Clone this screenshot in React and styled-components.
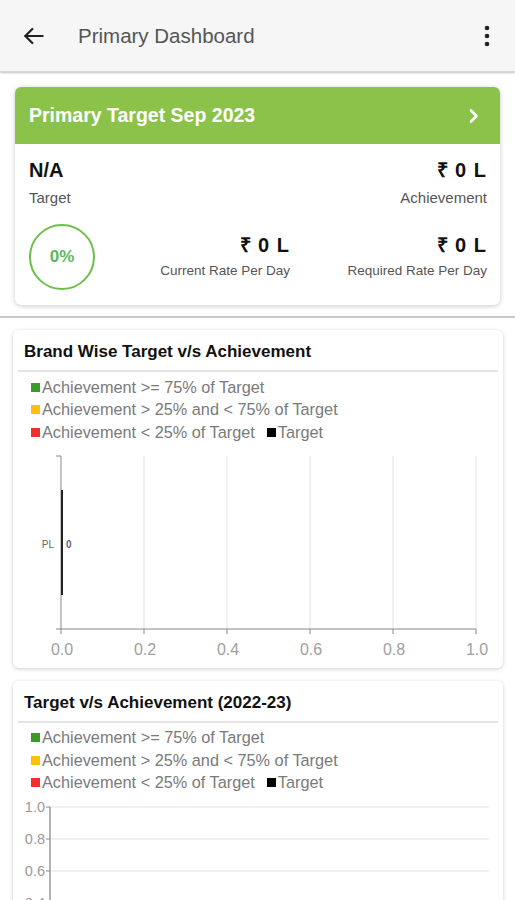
import React from "react";
import styled, { createGlobalStyle } from "styled-components";

const Global = createGlobalStyle`
  html, body { margin: 0; padding: 0; background: #fff; }
  body { font-family: "Liberation Sans", Arial, sans-serif; width: 515px; height: 900px; overflow: hidden; }
  * { box-sizing: border-box; }
`;

const Page = styled.div`
  width: 515px;
  height: 900px;
  overflow: hidden;
  background: #fff;
  display: flex;
  flex-direction: column;
`;

const AppBar = styled.header`
  height: 72px;
  flex: none;
  background: #f6f6f6;
  display: flex;
  align-items: center;
  padding: 0 14px 0 20px;
  box-shadow: 0 1px 2px rgba(0,0,0,0.25);
  border-bottom: 1px solid #d8d8d8;
  position: relative;
  z-index: 1;
`;

const IconBtn = styled.div`
  width: 28px;
  height: 28px;
  display: flex;
  align-items: center;
  justify-content: center;
  color: #222;
`;

const BarTitle = styled.h1`
  margin: 0 0 0 30px;
  font-size: 20.5px;
  font-weight: 400;
  color: #555;
  flex: 1;
`;

const Top = styled.section`
  flex: none;
  padding: 15px 15px 11px 15px;
  border-bottom: 2px solid #c9c9c9;
`;

const Card = styled.div`
  background: #fff;
  border-radius: 6px;
  box-shadow: 0 1px 5px rgba(0,0,0,0.22);
  overflow: hidden;
`;

const GreenHead = styled.div`
  height: 57px;
  background: #8bc34a;
  display: flex;
  align-items: center;
  justify-content: space-between;
  padding: 0 20px 0 14px;
  color: #fff;
  font-size: 19.5px;
  font-weight: 700;
`;

const Body = styled.div`
  padding: 14px 13px 15px 14px;
`;

const Row = styled.div`
  display: flex;
  justify-content: space-between;
  align-items: ${p => p.$align || "flex-start"};
  margin-top: ${p => p.$mt || 0}px;
`;

const Stat = styled.div`
  display: flex;
  flex-direction: column;
  align-items: ${p => (p.$right ? "flex-end" : "flex-start")};
  width: ${p => p.$w || "auto"};
`;

const Big = styled.div`
  font-size: 20px;
  font-weight: 700;
  color: #111;
  line-height: 24px;
  letter-spacing: ${p => (p.$spaced ? "1px" : "0")};
`;

const Label = styled.div`
  font-size: ${p => p.$size || 15}px;
  color: #555;
  margin-top: ${p => p.$mt || 7}px;
`;

const Circle = styled.div`
  width: 66px;
  height: 66px;
  border-radius: 50%;
  border: 2px solid #6cc04a;
  display: flex;
  align-items: center;
  justify-content: center;
  color: #5cb85c;
  font-weight: 700;
  font-size: 17px;
`;

const Rates = styled.div`
  display: flex;
  margin-top: -4px;
`;

const Charts = styled.div`
  padding: 12px 12px 0 13px;
  display: flex;
  flex-direction: column;
  gap: 13px;
`;

const ChartCard = styled.div`
  background: #fff;
  border-radius: 6px;
  box-shadow: 0 1px 4px rgba(0,0,0,0.2);
  padding: 0 5px;
`;

const ChartTitle = styled.div`
  font-size: 17px;
  font-weight: 700;
  color: #111;
  padding: 12px 6px 8px 6px;
  border-bottom: 2px solid #e3e3e3;
`;

const Legend = styled.div`
  padding: 4px 0 0 13px;
  display: flex;
  flex-direction: column;
`;

const LegendRow = styled.div`
  display: flex;
  align-items: center;
  height: 22.5px;
  font-size: 16.3px;
  color: #7a7a7a;
`;

const Swatch = styled.span`
  width: 9px;
  height: 9px;
  background: ${p => p.$c};
  margin: 0 2px 0 ${p => p.$ml || 0}px;
  display: inline-block;
`;

const LegendBlock = () => (
  <Legend>
    <LegendRow><Swatch $c="#3a9a2a" />Achievement &gt;= 75% of Target</LegendRow>
    <LegendRow><Swatch $c="#ffc107" />Achievement &gt; 25% and &lt; 75% of Target</LegendRow>
    <LegendRow><Swatch $c="#f0302a" />Achievement &lt; 25% of Target<Swatch $c="#000" $ml={12} />Target</LegendRow>
  </Legend>
);

const Svg = styled.svg`
  display: block;
`;

const ticks = [0, 0.2, 0.4, 0.6, 0.8, 1.0];

const BarChart = () => {
  const x0 = 43, x1 = 458, yT = 12, yB = 185;
  return (
    <Svg width="480" height="224" viewBox="0 0 480 224">
      {ticks.map((t, i) => {
        const x = x0 + (x1 - x0) * t;
        return (
          <g key={i}>
            {i > 0 && <line x1={x} y1={yT} x2={x} y2={yB} stroke="#e2e2e2" strokeWidth="1" />}
            <line x1={x} y1={yB} x2={x} y2={yB + 5} stroke="#888" strokeWidth="1" />
            <text x={x + 1} y={yB + 26} textAnchor="middle" fontSize="16" fill="#a0a0a0" fontFamily="Liberation Sans, Arial, sans-serif">{t.toFixed(1)}</text>
          </g>
        );
      })}
      <line x1={x0} y1={yT} x2={x0} y2={yB} stroke="#888" strokeWidth="1" />
      <line x1={x0 - 5} y1={yT} x2={x0} y2={yT} stroke="#888" strokeWidth="1" />
      <line x1={x0 - 5} y1={yB} x2={x1} y2={yB} stroke="#888" strokeWidth="1" />
      <rect x={x0} y={yT + 34} width="2" height="105" fill="#222" />
      <text x={x0 - 7} y={yT + 92} textAnchor="end" fontSize="10" fill="#666" fontFamily="Liberation Sans, Arial, sans-serif">PL</text>
      <text x={x0 + 5} y={yT + 92} fontSize="10" fontWeight="700" fill="#666" fontFamily="Liberation Sans, Arial, sans-serif">0</text>
    </Svg>
  );
};

const LineChart = () => {
  const xA = 32, xR = 471, y0 = 13;
  const rows = [1.0, 0.8, 0.6, 0.4, 0.2];
  return (
    <Svg width="480" height="140" viewBox="0 0 480 140">
      {rows.map((v, i) => {
        const y = y0 + i * 32;
        return (
          <g key={i}>
            <line x1={xA} y1={y} x2={xR} y2={y} stroke="#e2e2e2" strokeWidth="1" />
            <line x1={xA - 4} y1={y} x2={xA} y2={y} stroke="#888" strokeWidth="1" />
            <text x={xA - 5} y={y + 5} textAnchor="end" fontSize="14.5" fill="#9a9a9a" fontFamily="Liberation Sans, Arial, sans-serif">{v.toFixed(1)}</text>
          </g>
        );
      })}
      <line x1={xA} y1={y0} x2={xA} y2={140} stroke="#999" strokeWidth="1.5" />
    </Svg>
  );
};

export default function App() {
  return (
    <Page>
      <Global />
      <AppBar>
        <IconBtn>
          <svg width="26" height="26" viewBox="0 0 24 24" fill="none" stroke="#222" strokeWidth="2" strokeLinecap="round" strokeLinejoin="round">
            <path d="M20 12H4" />
            <path d="M10.5 5.5L4 12l6.5 6.5" />
          </svg>
        </IconBtn>
        <BarTitle>Primary Dashboard</BarTitle>
        <IconBtn>
          <svg width="6" height="22" viewBox="0 0 6 22">
            <circle cx="3" cy="3" r="2.3" fill="#222" />
            <circle cx="3" cy="11" r="2.3" fill="#222" />
            <circle cx="3" cy="19" r="2.3" fill="#222" />
          </svg>
        </IconBtn>
      </AppBar>

      <Top>
        <Card>
          <GreenHead>
            <span>Primary Target Sep 2023</span>
            <svg width="12" height="16" viewBox="0 0 12 16" fill="none" stroke="#fff" strokeWidth="2.6" strokeLinecap="round" strokeLinejoin="round">
              <path d="M3 2.5l5.5 5.5L3 13.5" />
            </svg>
          </GreenHead>
          <Body>
            <Row>
              <Stat>
                <Big>N/A</Big>
                <Label>Target</Label>
              </Stat>
              <Stat $right>
                <Big $spaced>₹ 0 L</Big>
                <Label>Achievement</Label>
              </Stat>
            </Row>
            <Row $align="center" $mt={18}>
              <Circle>0%</Circle>
              <Rates>
                <Stat $right $w="185px">
                  <Big $spaced>₹ 0 L</Big>
                  <Label $size={13.5} $mt={6}>Current Rate Per Day</Label>
                </Stat>
                <Stat $right $w="197px">
                  <Big $spaced>₹ 0 L</Big>
                  <Label $size={13.5} $mt={6}>Required Rate Per Day</Label>
                </Stat>
              </Rates>
            </Row>
          </Body>
        </Card>
      </Top>

      <Charts>
        <ChartCard>
          <ChartTitle>Brand Wise Target v/s Achievement</ChartTitle>
          <LegendBlock />
          <BarChart />
        </ChartCard>
        <ChartCard>
          <ChartTitle>Target v/s Achievement (2022-23)</ChartTitle>
          <LegendBlock />
          <LineChart />
        </ChartCard>
      </Charts>
    </Page>
  );
}
